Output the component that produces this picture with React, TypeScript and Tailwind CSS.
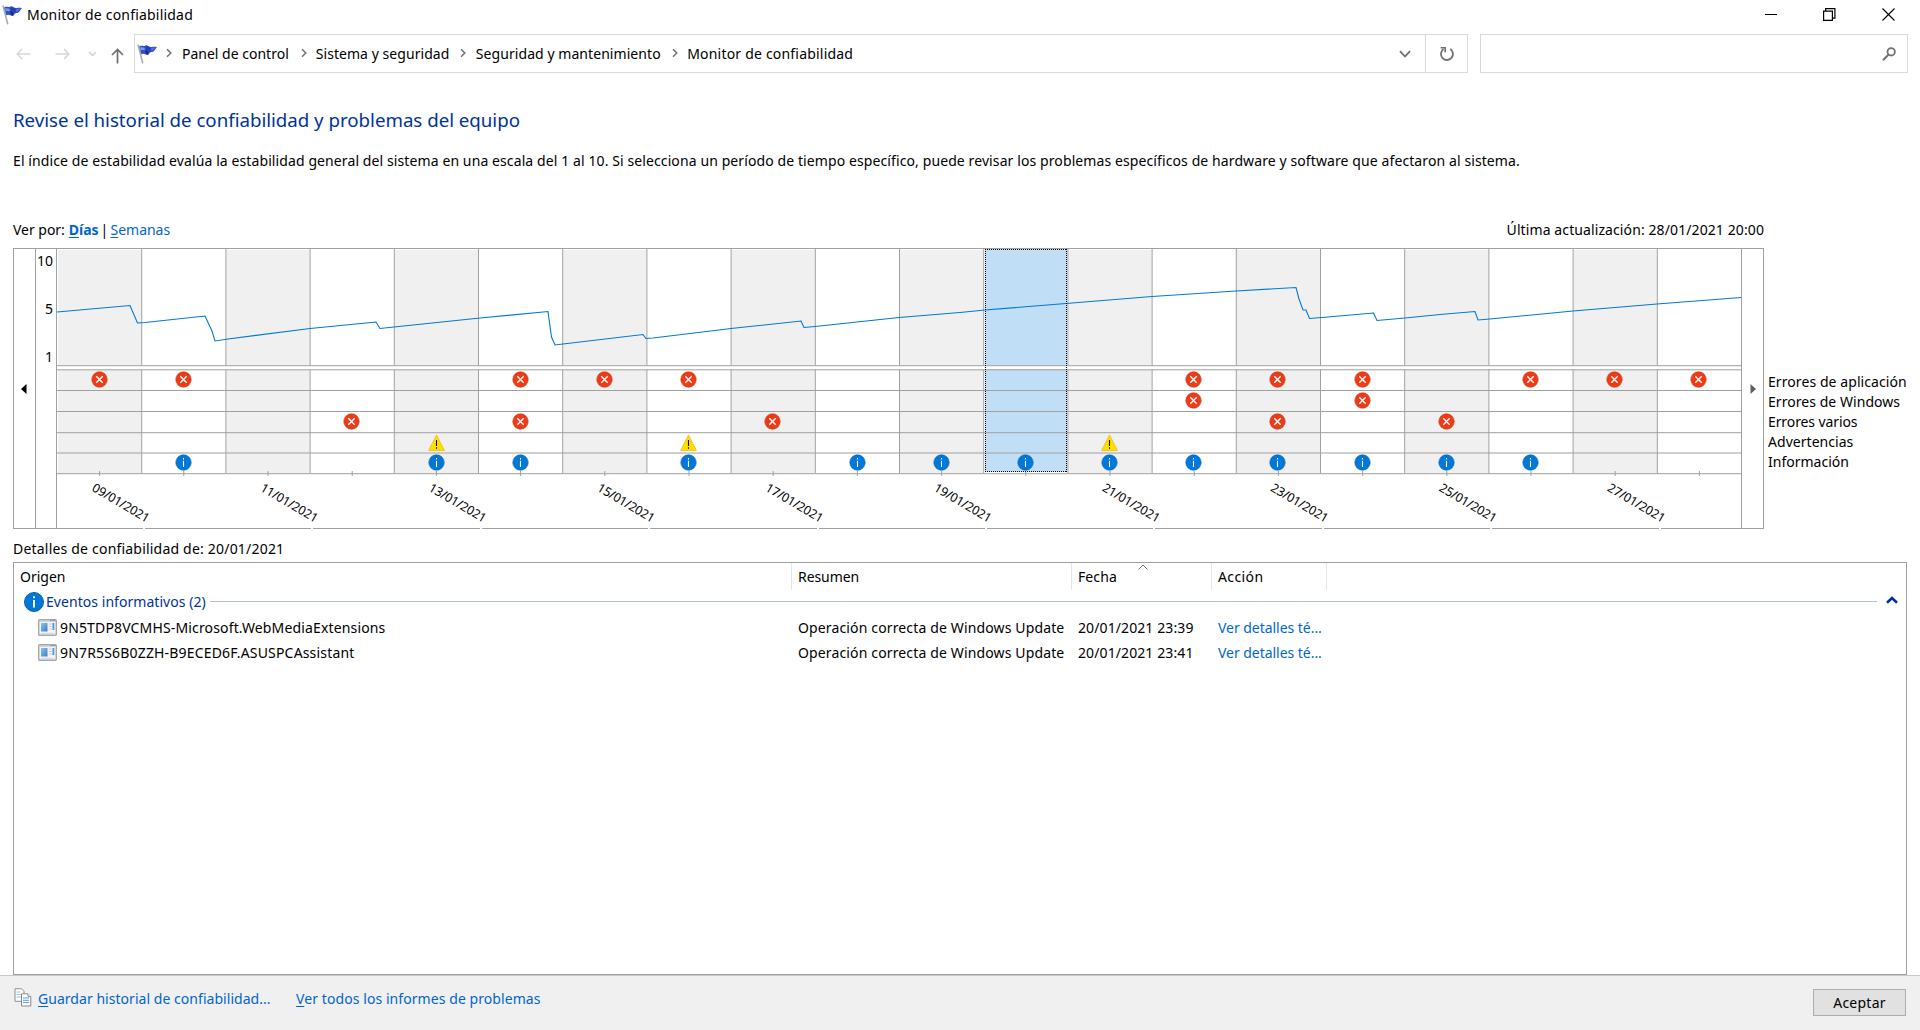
import type { ReactNode } from 'react'

const COL = 84.2
const DAYS = 20
const PLOT_W = 1684

// row offsets inside the event grid
const rowLines = [116.2, 120.3, 141, 162, 183.2, 203.5, 224.2]

type Kind = 'error' | 'warning' | 'info'

const events: { y: number; kind: Kind; days: number[] }[] = [
  { y: 130.5, kind: 'error',   days: [0, 1, 5, 6, 7, 13, 14, 15, 17, 18, 19] },
  { y: 151.5, kind: 'error',   days: [13, 15] },
  { y: 172.5, kind: 'error',   days: [3, 5, 8, 14, 16] },
  { y: 193.7, kind: 'warning', days: [4, 7, 12] },
  { y: 213.5, kind: 'info',    days: [1, 4, 5, 7, 9, 10, 11, 12, 13, 14, 15, 16, 17] },
]

const stability =
  '0,63 73,56.5 80.5,74 88,73.5 148,67 155,82 158,92 171,90 253,79.5 319,73 323,79.5 337,78 423,69 ' +
  '491,62.5 494.5,88 498,96 506,95 586,85.5 589,89.5 596,89 674,79.5 744,72 747,78.5 758,77.5 842,68.5 ' +
  '903,63.5 928,61 1009,54.5 1095,47.5 1179,42 1239,38.5 1242,50 1246,61 1249,61 1252.5,69.5 1265,68.5 ' +
  '1316.5,64 1320,71.5 1348,69 1383,65.5 1418,62.5 1421,71 1433,70 1516,62 1600,55 1684,48.5'

const dates = ['09', '11', '13', '15', '17', '19', '21', '23', '25', '27'].map(d => `${d}/01/2021`)

const rows = [
  { source: '9N5TDP8VCMHS-Microsoft.WebMediaExtensions', track: 'tracking-[0.15px]', date: '20/01/2021 23:39' },
  { source: '9N7R5S6B0ZZH-B9ECED6F.ASUSPCAssistant', track: 'tracking-[0.17px]', date: '20/01/2021 23:41' },
]

const legend = [
  { label: 'Errores de aplicación', track: 'tracking-[0.08px]' },
  { label: 'Errores de Windows', track: 'tracking-[0.05px]' },
  { label: 'Errores varios', track: 'tracking-[-0.1px]' },
  { label: 'Advertencias', track: 'tracking-[0.04px]' },
  { label: 'Información', track: 'tracking-normal' },
]

function FlagIcon() {
  return (
    <svg width="21" height="20" viewBox="0 0 21 20" className="shrink-0">
      <path d="M1.2 1.2 5.6 18.6" stroke="#a9adb1" strokeWidth="1.7" strokeLinecap="round" />
      <path d="M2.2 2.4C4.4 1 6.4 2.6 8.6 1.4c1.7-.5 2.8 1.4 4.8 1.6 2.4.3 4-.7 6.6.2-1.500 1-1.800 3-3.600 4.400-1.200.8-2.600.4-3.600 1.200-.9 1-.9 2-2.200 2.200C8.400 10.400 6.600 8.800 4.300 10.200Z" fill="#3350c4" />
      <path d="M3 3.6c1.5-.9 2.9.3 4.3-.2l.7 2.700C6.400 6.600 5 5.500 3.600 6.400Z" fill="#7d97ea" />
      <path d="M8 6.200c1.500-.2 2.600.6 3.600 1.400l-1 3C9.800 10.600 9 10 8.800 9.600Z" fill="#1b2b92" />
      <path d="M8.800 2c1.600-.2 2.800 1.300 4.400 1.600l.5 3.400c-2 .2-3.400-1-4.600-1.400Z" fill="#2440b4" />
      <path d="M14 3.800c1.700.2 3.200-.4 4.700-.2-1.200 1-1.500 2-2.400 2.700l-2 .4Z" fill="#4f70dc" />
    </svg>
  )
}

function Chevron({ className = '' }: { className?: string }) {
  return (
    <svg width="6" height="10" viewBox="0 0 6 10" fill="none" stroke="#707070" strokeWidth="1.5" className={`shrink-0 ${className}`}>
      <path d="M1 1.2 4.8 5 1 8.8" />
    </svg>
  )
}

// x is the day's pixel column; the half pixel keeps the glyph strokes sharp
function Marker({ kind, day, y }: { kind: Kind; day: number; y: number }) {
  return (
    <g transform={`translate(${Math.floor((day + 0.5) * 84.17 + 0.4) + 0.5} ${y})`}>
      {kind === 'error' && (
        <>
          <circle r="7.7" fill="#f03a17" stroke="#c43a1c" strokeWidth="0.7" />
          <path d="M-3.2-3.2 3.2 3.2M3.2-3.2-3.2 3.2" stroke="#fff" strokeWidth="1.4" />
        </>
      )}
      {kind === 'warning' && (
        <>
          <path d="M0-7.8 7.9 7.7H-7.9Z" fill="#ffdf00" stroke="#f2b500" strokeWidth="0.7" />
          <path d="M0-2.700V3.300M0 4.500V6" stroke="#111" strokeWidth="1.1" />
        </>
      )}
      {kind === 'info' && (
        <>
          <circle r="7.7" fill="#0078d7" stroke="#1065ad" strokeWidth="0.7" />
          <path d="M0-4.600V-3.100M0-1.700V4.500" stroke="#fff" strokeWidth="1.1" />
        </>
      )}
    </g>
  )
}

function StabilityChart() {
  const days = Array.from({ length: DAYS }, (_, i) => i)
  return (
    <svg width={PLOT_W} height="279" viewBox="0 0 1684 279" className="block shrink-0 overflow-visible">
      {days.filter(i => i % 2 === 0).map(i => (
        <g key={i} fill="#f0f0f0">
          <rect x={i * COL + 1} y="1" width={COL - 1} height="115" />
          <rect x={i * COL + 1} y="121" width={COL - 1} height="103" />
        </g>
      ))}
      <rect x="928" y="0" width="82" height="116.5" fill="#c0def5" />
      <rect x="928" y="120" width="82" height="103" fill="#c0def5" />

      {/* Grid */}
      {days.slice(1).map(i => (
        <g key={i} fill="#a0a0a0">
          <rect x={i * COL} y="0" width="1" height="116.5" />
          <rect x={i * COL} y="120.3" width="1" height="104" />
        </g>
      ))}
      {rowLines.map(y => <rect key={y} x="0" y={y} width={PLOT_W} height="1" fill="#a0a0a0" />)}
      {days.map(i => <rect key={i} x={(i + 0.5) * COL} y="222" width="1" height="5" fill="#a0a0a0" />)}

      <polyline points={stability} fill="none" stroke="#0078d7" strokeWidth="1.1" />

      {/* Focus rectangle of the selected day */}
      <g stroke="#000" strokeDasharray="1 1">
        <path d="M928 .5h82" />
        <path d="M928 222.5h82" />
        <path d="M928.5 0v223" />
        <path d="M1009.5 0v223" />
      </g>

      {events.flatMap(({ y, kind, days: on }) =>
        on.map(d => <Marker key={`${y}-${d}`} kind={kind} day={d} y={y} />)
      )}

      {/* Slanted dates, one every two days */}
      {dates.map((d, n) => (
        <g key={d}>
          <text
            transform={`translate(${34 + n * COL * 2} 241.3) rotate(30.5)`}
            fontSize="12.4"
            letterSpacing="-0.18"
            fill="#000"
          >
            {d}
          </text>
          <rect x={Math.round(86 + n * COL * 2)} y="279" width="2" height="1" fill="#fff" />
        </g>
      ))}
    </svg>
  )
}

function Link({ children, className = '' }: { children: ReactNode; className?: string }) {
  return <a className={`text-[#0066cc] ${className}`}>{children}</a>
}

function Key({ children }: { children: ReactNode }) {
  return <span className="underline underline-offset-2">{children}</span>
}

function TitleBar() {
  return (
    <div className="flex h-[30px] items-center pl-0.5">
      <FlagIcon />
      <span className="ml-1 tracking-[0.2px]">Monitor de confiabilidad</span>
      <div className="mr-[25px] ml-auto flex items-center gap-[46px]">
        <svg width="13" height="13" viewBox="0 0 13 13" stroke="#000" className="-mt-0.5 -mr-px"><path d="M0 6.5h12" /></svg>
        <svg width="13" height="13" viewBox="0 0 13 13" fill="none" stroke="#000" strokeWidth="1.2" className="-mt-0.5">
          <path d="M.6 3.1h8.8v9.3H.6ZM2.6 3.1V.6h9.3v9.5H9.4" />
        </svg>
        <svg width="13" height="13" viewBox="0 0 13 13" stroke="#000" strokeWidth="1.1" className="-mt-0.5">
          <path d="M.5.5l12 12M12.5.5l-12 12" />
        </svg>
      </div>
    </div>
  )
}

function NavBar() {
  return (
    <div className="mt-1 flex h-[39px] pr-[12px]">
      <div className="flex w-[134px] items-center pl-4">
        <svg width="15" height="12" viewBox="0 0 15 12" fill="none" stroke="#d6d6d6" strokeWidth="1.5"><path d="M14.5 6H1.2M6 1 1.2 6 6 11" /></svg>
        <svg width="15" height="12" viewBox="0 0 15 12" fill="none" stroke="#d6d6d6" strokeWidth="1.5" className="ml-6"><path d="M.5 6h13.3M9 1l4.8 5L9 11" /></svg>
        <svg width="9" height="6" viewBox="0 0 9 6" fill="none" stroke="#d0d0d0" strokeWidth="1.4" className="ml-[18px]"><path d="M1 1l3.5 3.5L8 1" /></svg>
        <svg width="13" height="16" viewBox="0 0 13 16" fill="none" stroke="#707070" strokeWidth="1.7" className="mt-1 ml-[14px]"><path d="M6.5 15.5V1.500M1 7l5.500-5.500L12 7" /></svg>
      </div>
      <div className="flex w-[1334px] border border-[#d9d9d9]">
        <div className="flex flex-1 items-center pl-0.5">
          <FlagIcon />
          <Chevron className="mb-px ml-2" />
          <span className="ml-[10px] tracking-normal">Panel de control</span>
          <Chevron className="mb-px ml-3" />
          <span className="ml-[9px] tracking-[0.05px]">Sistema y seguridad</span>
          <Chevron className="mb-px ml-[11px]" />
          <span className="ml-[9.5px] tracking-[0.06px]">Seguridad y mantenimiento</span>
          <Chevron className="mb-px ml-[11px]" />
          <span className="ml-[9.5px] tracking-[0.2px]">Monitor de confiabilidad</span>
          <svg width="12" height="8" viewBox="0 0 12 8" fill="none" stroke="#707070" strokeWidth="1.8" className="mr-[14px] ml-auto"><path d="M1 1.2 6 6.5l5-5.3" /></svg>
        </div>
        <div className="flex w-[42px] items-center justify-center border-l border-[#d9d9d9]">
          <svg width="16" height="16" viewBox="0 0 16 16" fill="none" stroke="#707070" strokeWidth="1.8">
            <path d="M11.3 3A6 6 0 1 1 4.5 3.1" />
            <path d="M1.6 1.8H6.2V6.2" strokeWidth="1.6" />
          </svg>
        </div>
      </div>
      <div className="ml-3 flex flex-1 items-center justify-end border border-[#d9d9d9] pr-[11px]">
        <svg width="14" height="14" viewBox="0 0 14 14" fill="none" stroke="#707070" strokeWidth="1.8">
          <circle cx="9.2" cy="4.8" r="3.7" />
          <path d="M6.6 7.5 1 13.2" strokeWidth="2" />
        </svg>
      </div>
    </div>
  )
}

function ProgramIcon() {
  return (
    <svg width="19" height="17" viewBox="0 0 19 17" className="shrink-0">
      <defs>
        <linearGradient id="pane" x1="0" y1="0" x2="1" y2="1">
          <stop offset="0" stopColor="#8cc4ee" />
          <stop offset="1" stopColor="#3a7fc0" />
        </linearGradient>
      </defs>
      <rect x="0.7" y="0.7" width="17.6" height="15.6" rx="1" fill="#f4f5f7" stroke="#a3a6ac" strokeWidth="1.4" />
      <path d="M1.5 2h16" stroke="#c4c8ce" strokeWidth="1.5" />
      <path d="M12.5 1.5h1M14.5 1.5h1M16.3 1.5h1" stroke="#70757e" />
      <rect x="3" y="4" width="6.5" height="8.5" fill="url(#pane)" />
      <path d="M10.8 5h3M10.8 7.5h3M10.8 10h3" stroke="#c2ccd6" />
      <rect x="14.5" y="4" width="1.8" height="7" fill="#4b9ae0" />
      <path d="M3 14.3h13" stroke="#d2d5da" />
    </svg>
  )
}

function Details() {
  return (
    <div className="mt-[3px] h-[413px] border border-[#a0a0a0]">
      <div className="grid h-[26px] grid-cols-[778px_280px_140px_115px] leading-[27px]">
        <div className="border-r border-[#e5e5e5] pl-1.5 tracking-normal">Origen</div>
        <div className="border-r border-[#e5e5e5] pl-1.5 tracking-[-0.07px]">Resumen</div>
        <div className="flex border-r border-[#e5e5e5] pl-1.5">
          Fecha
          <svg width="10" height="6" viewBox="0 0 10 6" fill="none" stroke="#707070" className="mt-px ml-[21px]"><path d="M.5 5.5 5 1l4.5 4.5" /></svg>
        </div>
        <div className="border-r border-[#e5e5e5] pl-1.5 tracking-[0.4px]">Acción</div>
      </div>
      <div className="mt-px flex h-6 items-center pl-[10px]">
        <svg width="20" height="20" viewBox="0 0 20 20" className="mb-px shrink-0">
          <circle cx="10" cy="10" r="9.5" fill="#0078d7" stroke="#0f62a8" />
          <path d="M10 4.3v2M10 8v7.5" stroke="#fff" strokeWidth="2" />
        </svg>
        <span className="ml-0.5 tracking-[0.05px] text-[#003399]">Eventos informativos (2)</span>
        <div className="mb-px ml-1 h-px flex-1 bg-[#b2bee0]" />
        <svg width="12" height="8" viewBox="0 0 12 8" fill="none" stroke="#003399" strokeWidth="2.6" className="mr-2 mb-1 ml-[9px]"><path d="M1 6.8 6 2l5 4.8" /></svg>
      </div>
      <div className="mt-px">
        {rows.map(r => (
          <div key={r.source} className="grid h-[25px] grid-cols-[778px_280px_140px_115px] leading-[25px]">
            <div className="flex items-center pl-6">
              <ProgramIcon />
              <span className={`ml-[3px] ${r.track}`}>{r.source}</span>
            </div>
            <div className="pl-1.5 tracking-[0.14px]">Operación correcta de Windows Update</div>
            <div className="pl-1.5">{r.date}</div>
            <Link className="pl-1.5 tracking-[-0.04px]">Ver detalles té...</Link>
          </div>
        ))}
      </div>
    </div>
  )
}

function Footer() {
  return (
    <div className="flex h-[55px] items-start border-t border-[#c8c8c8] bg-[#f0f0f0] pt-[13px] pr-[14px] pl-[14px]">
      <svg width="18" height="19" viewBox="0 0 18 19" fill="#fff" stroke="#8a8a8a" className="-mt-px">
        <path d="M1 .8h6.5L10 3.3v10H1Z" />
        <path d="M2.5 4h4M2.5 6.5h5M2.5 9h5" stroke="#9cc3f0" />
        <path d="M7.5 5.8H14L16.8 8.6V18H7.5Z" />
        <path d="M14 5.8V8.6h2.8" />
        <path d="M9 10h6M9 12.3h6M9 14.6h6" stroke="#5b9be6" />
      </svg>
      <Link className="ml-1.5 tracking-[0.04px]"><Key>G</Key>uardar historial de confiabilidad...</Link>
      <Link className="ml-[25.5px] tracking-[0.07px]"><Key>V</Key>er todos los informes de problemas</Link>
      <button className="ml-auto h-[27px] w-[93px] border border-[#adadad] bg-[#e1e1e1] tracking-[0.25px]">Aceptar</button>
    </div>
  )
}

export default function App() {
  return (
    <div className="flex h-[1030px] w-[1920px] flex-col overflow-hidden bg-white font-['Noto_Sans','Open_Sans',sans-serif] text-[14px] leading-5 tracking-[0.1px] whitespace-nowrap text-black">
      <TitleBar />
      <NavBar />
      <main className="flex-1 px-[13px]">
        <h1 className="mt-[35px] text-[18.7px] leading-6 tracking-[-0.01px] text-[#003399]">
          Revise el historial de confiabilidad y problemas del equipo
        </h1>
        <p className="mt-[19px]">
          El índice de estabilidad evalúa la estabilidad general del sistema en una escala del 1 al 10. Si selecciona un período de tiempo específico, puede revisar los problemas específicos de hardware y software que afectaron al sistema.
        </p>

        <div className="mt-[49px] flex w-[1751px] justify-between">
          <div className="flex tracking-[-0.03px]">
            <span>Ver por:</span>
            <Link className="ml-1 font-bold"><Key>D</Key>ías</Link>
            <span className="mr-1 ml-0.5 w-1.5 text-center">|</span>
            <Link><Key>S</Key>emanas</Link>
          </div>
          <span>Última actualización: 28/01/2021 20:00</span>
        </div>

        <div className="mt-2 flex">
          <div className="flex h-[281px] w-[1751px] shrink-0 border border-[#a0a0a0]">
            <div className="flex w-[22px] items-center justify-center border-r border-[#a0a0a0] pr-0.5">
              <svg width="6" height="10" viewBox="0 0 6 10"><path d="M5.5 0v10L0 5Z" /></svg>
            </div>
            <div className="flex w-[21px] flex-col gap-7 border-r border-[#a0a0a0] pt-0.5 pr-[3px] text-right tracking-normal">
              <span>10</span>
              <span>5</span>
              <span>1</span>
            </div>
            <StabilityChart />
            <div className="flex w-[22px] items-center justify-center border-l border-[#a0a0a0]">
              <svg width="6" height="10" viewBox="0 0 6 10" fill="#606060"><path d="M.5 0v10L6 5Z" /></svg>
            </div>
          </div>
          <div className="ml-1 pt-[124px]">
            {legend.map(l => <div key={l.label} className={l.track}>{l.label}</div>)}
          </div>
        </div>

        <div className="mt-[10px] tracking-[0.2px]">Detalles de confiabilidad de: 20/01/2021</div>
        <Details />
      </main>
      <Footer />
    </div>
  )
}
